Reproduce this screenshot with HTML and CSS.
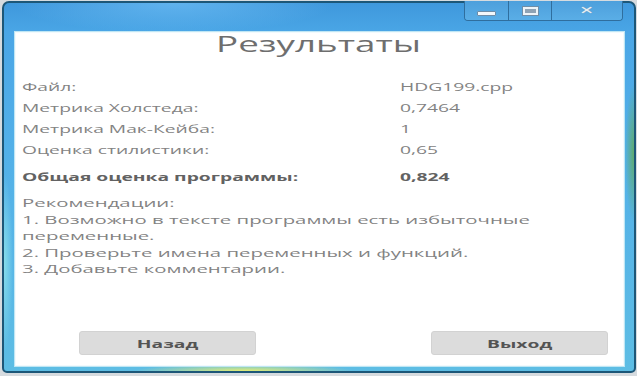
FILE: index.html
```html
<!DOCTYPE html>
<html lang="ru">
<head>
<meta charset="utf-8">
<title>Результаты</title>
<link rel="stylesheet" href="styles.css">
</head>
<body>
<div class="window">
  <div class="titlebar">
    <div class="caption-buttons">
      <div class="cbtn cbtn-min"><span class="g-min"></span></div>
      <div class="cbtn cbtn-max"><span class="g-max"></span></div>
      <div class="cbtn cbtn-close"><span class="g-close">✕</span></div>
    </div>
  </div>
  <div class="client">
    <h1 class="title"><span class="sx sx-c">Результаты</span></h1>
    <div class="grid">
      <div class="cell"><span class="sx">Файл:</span></div>
      <div class="cell"><span class="sx">HDG199.cpp</span></div>
      <div class="cell"><span class="sx">Метрика Холстеда:</span></div>
      <div class="cell"><span class="sx">0,7464</span></div>
      <div class="cell"><span class="sx">Метрика Мак-Кейба:</span></div>
      <div class="cell"><span class="sx">1</span></div>
      <div class="cell"><span class="sx">Оценка стилистики:</span></div>
      <div class="cell"><span class="sx">0,65</span></div>
      <div class="cell bold"><span class="sx">Общая оценка программы:</span></div>
      <div class="cell bold"><span class="sx">0,824</span></div>
    </div>
    <div class="recs">
      <div class="line"><span class="sx sx-r">Рекомендации:</span></div>
      <div class="line"><span class="sx sx-r">1. Возможно в тексте программы есть избыточные</span></div>
      <div class="line"><span class="sx sx-r">переменные.</span></div>
      <div class="line"><span class="sx sx-r">2. Проверьте имена переменных и функций.</span></div>
      <div class="line"><span class="sx sx-r">3. Добавьте комментарии.</span></div>
    </div>
    <div class="buttons">
      <div class="btn"><span class="sx sx-c">Назад</span></div>
      <div class="btn"><span class="sx sx-c">Выход</span></div>
    </div>
  </div>
</div>
</body>
</html>
```

FILE: styles.css
```css
html, body {
  margin: 0;
  padding: 0;
}
body {
  width: 637px;
  height: 376px;
  background: #d6dbdf;
  font-family: "Open Sans", "DejaVu Sans", sans-serif;
  overflow: hidden;
}
.window {
  box-sizing: border-box;
  width: 634px;
  height: 372px;
  margin: 1px 0 0 2px;
  border: 2px solid #1d5778;
  border-radius: 7px 7px 5px 5px;
  padding: 0 9px 4px 10px;
  display: flex;
  flex-direction: column;
  background:
    radial-gradient(ellipse 110px 7px at 240px 100%, rgba(236, 240, 110, 0.95), rgba(236, 240, 110, 0) 100%),
    radial-gradient(ellipse 9px 70px at 100% 150px, rgba(96, 170, 100, 0.95), rgba(96, 170, 100, 0) 100%),
    radial-gradient(ellipse 9px 90px at 0 260px, rgba(140, 225, 235, 0.9), rgba(140, 225, 235, 0) 100%),
    radial-gradient(ellipse 160px 30px at 170px 0, rgba(110, 190, 245, 0.7), rgba(110, 190, 245, 0) 100%),
    linear-gradient(to bottom, #3f98dc 0%, #4aa6e6 8%, #52b0e8 40%, #58b6e6 70%, #5dbde4 100%);
}
.titlebar {
  height: 28px;
  display: flex;
  justify-content: flex-end;
  margin-right: 2px;
}
.caption-buttons {
  display: flex;
  height: 19px;
  margin-top: -2px;
  border: 1px solid #2f6e9e;
  border-top: none;
  border-radius: 0 0 4px 4px;
  overflow: hidden;
}
.cbtn {
  display: flex;
  align-items: center;
  justify-content: center;
  background: linear-gradient(to bottom, #4d9fdc, #5aaee6);
  border-left: 1px solid #2f6e9e;
}
.cbtn:first-child { border-left: none; }
.cbtn-min { width: 43px; }
.cbtn-max { width: 42px; }
.cbtn-close { width: 70px; }
.g-min {
  width: 17px;
  height: 3px;
  margin-top: 6px;
  background: #f4f8fb;
  border: 1px solid #6f8ea8;
  border-radius: 1px;
}
.g-max {
  box-sizing: border-box;
  width: 15px;
  height: 8px;
  margin-top: 1px;
  background: #8fa3b5;
  border: 2px solid #eef4f8;
  outline: 1px solid #6f8ea8;
}
.g-close {
  color: #e6eef4;
  font-family: "DejaVu Sans", sans-serif;
  font-size: 11px;
  font-weight: bold;
  line-height: 1;
  display: inline-block;
  transform: scaleX(1.6);
  text-shadow: 0 0 1px #7f98ae;
}
.client {
  flex: 1;
  background: #ffffff;
  border: 1px solid #bfe6f4;
  box-shadow: inset 0 0 0 1px #f2fafd;
  display: flex;
  flex-direction: column;
  padding: 0 0 11px 7px;
  color: #838383;
}
.sx {
  display: inline-block;
  white-space: nowrap;
  transform: scaleX(1.75);
  transform-origin: left center;
}
.sx-c {
  transform-origin: center center;
}
.sx-r {
  transform: scaleX(1.85);
}
.title {
  margin: 0;
  font-size: 21px;
  font-weight: normal;
  line-height: 25px;
  text-align: center;
  color: #6e6e6e;
  padding-right: 8px;
}
.grid {
  margin-top: 19px;
  display: grid;
  grid-template-columns: 378px 1fr;
  grid-auto-rows: 21px;
  font-size: 11px;
  line-height: 21px;
}
.cell.bold {
  font-weight: bold;
  color: #626262;
  margin-top: 6px;
}
.recs {
  margin-top: 14px;
  font-size: 11px;
  line-height: 16.5px;
}
.buttons {
  margin-top: auto;
  display: flex;
  justify-content: space-between;
  padding: 0 16px 0 57px;
}
.btn {
  box-sizing: border-box;
  width: 177px;
  height: 24px;
  background: #dcdcdc;
  border: 1px solid #d2d2d2;
  border-radius: 3px;
  display: flex;
  align-items: center;
  justify-content: center;
  font-size: 11px;
  font-weight: bold;
  color: #545454;
}
```
